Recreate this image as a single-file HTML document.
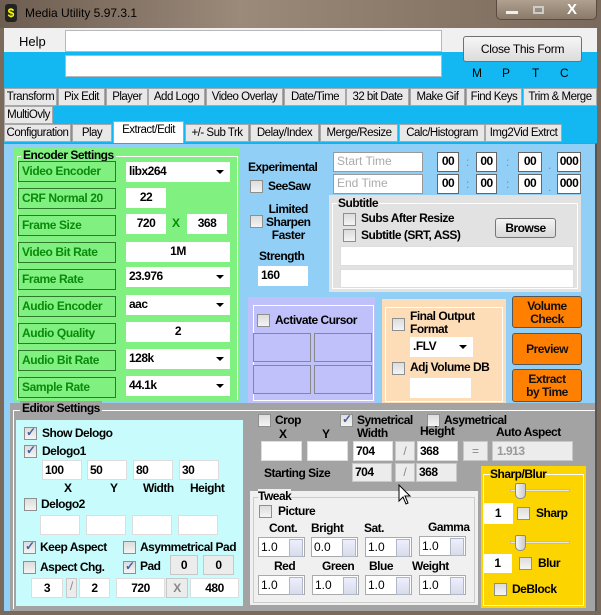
<!DOCTYPE html><html><head><meta charset="utf-8"><style>
*{margin:0;padding:0;box-sizing:border-box}
body{width:601px;height:615px;overflow:hidden;position:relative;font-family:"Liberation Sans",sans-serif;font-size:12px;background:#7a6a5c}
div,span{position:absolute}
.t{white-space:nowrap}
.b{font-weight:bold;letter-spacing:-0.5px;white-space:nowrap}
.in{background:#fff;border:1px solid #b8b8b8}
.tab{background:#e8e8e8;border:1px solid #a8a8a8;height:18px;text-align:center;line-height:16px;font-size:11.5px;letter-spacing:-0.5px;white-space:nowrap;overflow:hidden}
.cb{width:13px;height:13px;background:linear-gradient(#ddd,#f4f4f4);border:1px solid #8e8f8f}
.ck::after{content:"✓";position:absolute;left:1px;top:-3px;font-size:12px;color:#4a5fa0;font-weight:bold}
.lab{border:1px solid #2d7a2d;height:21px;color:#0a8a0a;font-weight:bold;font-size:12px;letter-spacing:-0.4px;line-height:18px;padding-left:3px;white-space:nowrap;overflow:hidden}
.c{text-align:center}
.dd::after{content:"";position:absolute;right:6px;top:8px;border:4px solid transparent;border-top:4px solid #000}
.ob{background:#ff7f00;border:1px solid #555;border-radius:3px;font-weight:bold;letter-spacing:-0.5px;text-align:center;color:#111;font-size:12px}
.sp{background:#fff;border:1px solid #aaa;height:20px;font-size:12px;padding-left:2px;line-height:18px}
.sp::after{content:"";position:absolute;right:1px;top:1px;width:12px;height:16px;background:linear-gradient(#eef,#d8dce8);border:1px solid #b0b8c8}
.g{background:#ececec;border:1px solid #c8c8c8}
</style></head><body>
<div style="left:0;top:0;width:601px;height:28px;background:linear-gradient(90deg,#6d5d50,#9b8a7a 40%,#8a7868 70%,#7a6a5c)"></div>
<div class="t" style="left:5px;top:4px;width:12px;height:18px;background:#222;border-radius:3px;color:#ff0;font-size:12px;font-weight:bold;text-align:center;line-height:18px">$</div>
<div class="t" style="left:25px;top:6px;font-size:12px;color:#000">Media Utility 5.97.3.1</div>
<div style="left:496px;top:0;width:101px;height:20px;border:1px solid #5a4a40;border-top:none;border-radius:0 0 5px 5px;background:linear-gradient(#b0a090,#8a7a6a)"></div>
<div style="left:506px;top:11px;width:12px;height:3px;background:#eee"></div>
<div style="left:533px;top:6px;width:11px;height:8px;border:2px solid #ccc"></div>
<div class="t" style="left:567px;top:1px;color:#fff;font-size:15px;font-weight:bold">X</div>
<div style="left:4px;top:28px;width:593px;height:583px;background:#13b8f2"></div>
<div style="left:4px;top:28px;width:593px;height:24px;background:#f0f0f0"></div>
<div class="t" style="left:19px;top:34px;font-size:13px">Help</div>
<div class="in" style="left:65px;top:30px;width:377px;height:22px"></div>
<div class="in" style="left:65px;top:55px;width:377px;height:22px"></div>
<div style="left:463px;top:36px;width:119px;height:26px;background:linear-gradient(#f6f6f6,#dcdcdc);border:1px solid #707070;border-radius:3px;text-align:center;line-height:24px;letter-spacing:-0.3px">Close This Form</div>
<div class="t" style="left:472px;top:66px">M</div><div class="t" style="left:502px;top:66px">P</div><div class="t" style="left:532px;top:66px">T</div><div class="t" style="left:560px;top:66px">C</div>
<div class="tab" style="left:4px;top:88px;width:53px">Transform</div>
<div class="tab" style="left:58px;top:88px;width:47px">Pix Edit</div>
<div class="tab" style="left:106px;top:88px;width:42px">Player</div>
<div class="tab" style="left:148px;top:88px;width:57px">Add Logo</div>
<div class="tab" style="left:206px;top:88px;width:77px">Video Overlay</div>
<div class="tab" style="left:284px;top:88px;width:62px">Date/Time</div>
<div class="tab" style="left:346px;top:88px;width:63px">32 bit Date</div>
<div class="tab" style="left:410px;top:88px;width:55px">Make Gif</div>
<div class="tab" style="left:466px;top:88px;width:56px">Find Keys</div>
<div class="tab" style="left:523px;top:88px;width:74px">Trim &amp; Merge</div>
<div class="tab" style="left:4px;top:106px;width:49px">MultiOvly</div>
<div class="tab" style="left:4px;top:124px;width:67px">Configuration</div>
<div class="tab" style="left:72px;top:124px;width:40px">Play</div>
<div class="tab" style="left:113px;top:121px;width:71px;height:23px;background:#fff;border-bottom:none">Extract/Edit</div>
<div class="tab" style="left:185px;top:124px;width:64px">+/- Sub Trk</div>
<div class="tab" style="left:250px;top:124px;width:69px">Delay/Index</div>
<div class="tab" style="left:320px;top:124px;width:78px">Merge/Resize</div>
<div class="tab" style="left:399px;top:124px;width:86px">Calc/Histogram</div>
<div class="tab" style="left:485px;top:124px;width:77px">Img2Vid Extrct</div>
<div style="left:4px;top:143px;width:593px;height:468px;background:#92cff6;border-top:1px solid #888;border-right:2px solid #555"></div>
<div style="left:14px;top:148px;width:226px;height:254px;background:#80f080"></div>
<div style="left:17px;top:156px;width:221px;height:244px;border:1px solid #fff;border-bottom:none"></div>
<div class="b" style="left:21px;top:148px;background:#80f080;padding:0 2px;font-size:12px">Encoder Settings</div>
<div class="lab" style="left:18px;top:161px;width:98px">Video Encoder</div>
<div class="lab" style="left:18px;top:188px;width:98px">CRF Normal 20</div>
<div class="lab" style="left:18px;top:215px;width:98px">Frame Size</div>
<div class="lab" style="left:18px;top:242px;width:98px">Video Bit Rate</div>
<div class="lab" style="left:18px;top:269px;width:98px">Frame Rate</div>
<div class="lab" style="left:18px;top:296px;width:98px">Audio Encoder</div>
<div class="lab" style="left:18px;top:323px;width:98px">Audio Quality</div>
<div class="lab" style="left:18px;top:350px;width:98px">Audio Bit Rate</div>
<div class="lab" style="left:18px;top:377px;width:98px">Sample Rate</div>
<div class="in dd b" style="left:126px;top:162px;width:104px;height:20px;border:none;padding-left:3px;line-height:19px">libx264</div>
<div class="in b c" style="left:126px;top:188px;width:40px;height:20px;border:none;line-height:19px">22</div>
<div class="in b c" style="left:126px;top:214px;width:40px;height:20px;border:none;line-height:19px">720</div>
<div class="b" style="left:172px;top:216px;color:#0a8a0a">X</div>
<div class="in b c" style="left:187px;top:214px;width:40px;height:20px;border:none;line-height:19px">368</div>
<div class="in b c" style="left:126px;top:242px;width:104px;height:20px;border:none;line-height:19px">1M</div>
<div class="in dd b" style="left:126px;top:267px;width:104px;height:20px;border:none;padding-left:3px;line-height:19px">23.976</div>
<div class="in dd b" style="left:126px;top:295px;width:104px;height:20px;border:none;padding-left:3px;line-height:19px">aac</div>
<div class="in b c" style="left:126px;top:322px;width:104px;height:20px;border:none;line-height:19px">2</div>
<div class="in dd b" style="left:126px;top:349px;width:104px;height:20px;border:none;padding-left:3px;line-height:19px">128k</div>
<div class="in dd b" style="left:126px;top:376px;width:104px;height:20px;border:none;padding-left:3px;line-height:19px">44.1k</div>
<div class="b" style="left:248px;top:160px">Experimental</div>
<div class="cb" style="left:250px;top:180px"></div><div class="b" style="left:268px;top:179px">SeeSaw</div>
<div class="cb" style="left:250px;top:215px"></div>
<div class="b c" style="left:266px;top:203px;line-height:13px">Limited<br>Sharpen<br>Faster</div>
<div class="b" style="left:259px;top:249px">Strength</div>
<div class="in b" style="left:258px;top:266px;width:50px;height:20px;border:none;padding-left:3px;line-height:19px">160</div>
<div class="in t" style="left:333px;top:152px;width:90px;height:20px;border-color:#999;color:#aaa;padding-left:3px;line-height:17px">Start Time</div>
<div class="in t" style="left:333px;top:174px;width:90px;height:20px;border-color:#999;color:#aaa;padding-left:3px;line-height:17px">End Time</div>
<div class="in b c" style="left:437px;top:152px;width:22px;height:20px;border-color:#666;line-height:17px">00</div>
<div class="in b c" style="left:476px;top:152px;width:21px;height:20px;border-color:#666;line-height:17px">00</div>
<div class="in b c" style="left:518px;top:152px;width:24px;height:20px;border-color:#666;line-height:17px">00</div>
<div class="in b c" style="left:557px;top:152px;width:24px;height:20px;border-color:#666;line-height:17px">000</div>
<div class="in b c" style="left:437px;top:174px;width:22px;height:20px;border-color:#666;line-height:17px">00</div>
<div class="in b c" style="left:476px;top:174px;width:21px;height:20px;border-color:#666;line-height:17px">00</div>
<div class="in b c" style="left:518px;top:174px;width:24px;height:20px;border-color:#666;line-height:17px">00</div>
<div class="in b c" style="left:557px;top:174px;width:24px;height:20px;border-color:#666;line-height:17px">000</div>
<div class="t" style="left:466px;top:155px;color:#888">:</div><div class="t" style="left:506px;top:155px;color:#888">:</div><div class="t" style="left:548px;top:158px;color:#888">.</div>
<div class="t" style="left:466px;top:177px;color:#888">:</div><div class="t" style="left:506px;top:177px;color:#888">:</div><div class="t" style="left:548px;top:180px;color:#888">.</div>
<div style="left:329px;top:195px;width:252px;height:97px;background:#e2e2e2"></div>
<div style="left:332px;top:203px;width:246px;height:86px;border:1px solid #fff"></div>
<div class="b" style="left:337px;top:196px;background:#e2e2e2;padding:0 1px">Subtitle</div>
<div class="cb" style="left:343px;top:213px"></div><div class="b" style="left:361px;top:211px">Subs After Resize</div>
<div class="cb" style="left:343px;top:229px"></div><div class="b" style="left:361px;top:228px">Subtitle (SRT, ASS)</div>
<div class="b c" style="left:495px;top:218px;width:61px;height:20px;background:linear-gradient(#f4f4f4,#d8d8d8);border:1px solid #777;border-radius:3px;line-height:18px">Browse</div>
<div class="in" style="left:340px;top:246px;width:234px;height:20px;border-color:#ddd"></div>
<div class="in" style="left:340px;top:269px;width:234px;height:19px;border-color:#ddd"></div>
<div style="left:248px;top:297px;width:127px;height:106px;background:#c0c0fa"></div>
<div style="left:253px;top:305px;width:121px;height:96px;border:1px solid #fff"></div>
<div class="cb" style="left:257px;top:314px"></div><div class="b" style="left:275px;top:313px">Activate Cursor</div>
<div style="left:253px;top:333px;width:58px;height:29px;border:1px solid #888"></div>
<div style="left:314px;top:333px;width:58px;height:29px;border:1px solid #888"></div>
<div style="left:253px;top:365px;width:58px;height:29px;border:1px solid #888"></div>
<div style="left:314px;top:365px;width:58px;height:29px;border:1px solid #888"></div>
<div style="left:382px;top:299px;width:124px;height:104px;background:#fddcb8"></div>
<div style="left:385px;top:307px;width:118px;height:95px;border:1px solid #fff"></div>
<div class="cb" style="left:392px;top:318px"></div>
<div class="b" style="left:410px;top:310px;line-height:13px">Final Output<br>Format</div>
<div class="in dd b" style="left:410px;top:337px;width:63px;height:20px;border:none;padding-left:3px;line-height:19px">.FLV</div>
<div class="cb" style="left:392px;top:362px"></div><div class="b" style="left:410px;top:360px">Adj Volume DB</div>
<div class="in" style="left:410px;top:378px;width:61px;height:20px;border:none"></div>
<div class="ob" style="left:512px;top:296px;width:70px;height:32px;line-height:13px;padding-top:3px">Volume<br>Check</div>
<div class="ob" style="left:512px;top:333px;width:70px;height:32px;line-height:30px">Preview</div>
<div class="ob" style="left:512px;top:369px;width:70px;height:33px;line-height:13px;padding-top:3px">Extract<br>by Time</div>
<div style="left:10px;top:403px;width:585px;height:208px;background:#a3a3a3"></div>
<div style="left:13px;top:410px;width:582px;height:199px;border:1px solid #fff;border-right:none;border-bottom:none"></div>
<div class="b" style="left:20px;top:401px;background:#a3a3a3;padding:0 2px">Editor Settings</div>
<div style="left:16px;top:420px;width:227px;height:186px;background:#c8fcfc"></div>
<div class="cb ck" style="left:24px;top:427px"></div><div class="b" style="left:42px;top:426px">Show Delogo</div>
<div class="cb ck" style="left:24px;top:445px"></div><div class="b" style="left:42px;top:444px">Delogo1</div>
<div class="in b" style="left:42px;top:460px;width:40px;height:20px;border-color:#ddd;padding-left:2px;line-height:18px">100</div>
<div class="in b" style="left:87px;top:460px;width:40px;height:20px;border-color:#ddd;padding-left:2px;line-height:18px">50</div>
<div class="in b" style="left:133px;top:460px;width:40px;height:20px;border-color:#ddd;padding-left:2px;line-height:18px">80</div>
<div class="in b" style="left:179px;top:460px;width:40px;height:20px;border-color:#ddd;padding-left:2px;line-height:18px">30</div>
<div class="b" style="left:64px;top:481px">X</div><div class="b" style="left:110px;top:481px">Y</div><div class="b" style="left:143px;top:481px">Width</div><div class="b" style="left:190px;top:481px">Height</div>
<div class="cb" style="left:24px;top:498px"></div><div class="b" style="left:41px;top:497px">Delogo2</div>
<div class="in" style="left:40px;top:515px;width:40px;height:20px;border-color:#ddd"></div>
<div class="in" style="left:86px;top:515px;width:40px;height:20px;border-color:#ddd"></div>
<div class="in" style="left:132px;top:515px;width:40px;height:20px;border-color:#ddd"></div>
<div class="in" style="left:178px;top:515px;width:40px;height:20px;border-color:#ddd"></div>
<div class="cb ck" style="left:23px;top:541px"></div><div class="b" style="left:40px;top:540px">Keep Aspect</div>
<div class="cb" style="left:123px;top:541px"></div><div class="b" style="left:140px;top:540px">Asymmetrical Pad</div>
<div class="cb" style="left:23px;top:561px"></div><div class="b" style="left:40px;top:560px">Aspect Chg.</div>
<div class="cb ck" style="left:123px;top:561px"></div><div class="b" style="left:140px;top:559px">Pad</div>
<div class="g b c" style="left:170px;top:555px;width:28px;height:20px;line-height:18px">0</div>
<div class="g b c" style="left:203px;top:555px;width:31px;height:20px;line-height:18px">0</div>
<div class="in b c" style="left:31px;top:578px;width:32px;height:20px;border-color:#ddd;line-height:18px">3</div>
<div class="g c" style="left:66px;top:578px;width:11px;height:20px;color:#888">/</div>
<div class="in b c" style="left:79px;top:578px;width:31px;height:20px;border-color:#ddd;line-height:18px">2</div>
<div class="in b c" style="left:116px;top:578px;width:49px;height:20px;border-color:#ddd;line-height:18px">720</div>
<div class="g b c" style="left:166px;top:578px;width:22px;height:20px;color:#888;line-height:18px">X</div>
<div class="in b c" style="left:190px;top:578px;width:49px;height:20px;border-color:#ddd;line-height:18px">480</div>
<div class="cb" style="left:258px;top:414px"></div><div class="b" style="left:275px;top:413px">Crop</div>
<div class="cb ck" style="left:340px;top:414px"></div><div class="b" style="left:357px;top:413px">Symetrical</div>
<div class="cb" style="left:427px;top:414px"></div><div class="b" style="left:444px;top:413px">Asymetrical</div>
<div class="b" style="left:279px;top:427px">X</div><div class="b" style="left:322px;top:427px">Y</div>
<div class="b" style="left:357px;top:426px">Width</div><div class="b" style="left:420px;top:424px">Height</div><div class="b" style="left:496px;top:425px">Auto Aspect</div>
<div class="in" style="left:261px;top:441px;width:41px;height:20px;border-color:#ddd"></div>
<div class="in" style="left:307px;top:441px;width:41px;height:20px;border-color:#ddd"></div>
<div class="in b" style="left:353px;top:441px;width:40px;height:20px;border-color:#ddd;padding-left:2px;line-height:18px">704</div>
<div class="g c" style="left:395px;top:441px;width:20px;height:20px;color:#888;line-height:18px">/</div>
<div class="in b" style="left:417px;top:441px;width:41px;height:20px;border-color:#ddd;padding-left:2px;line-height:18px">368</div>
<div class="g c" style="left:463px;top:441px;width:25px;height:20px;color:#888;line-height:18px">=</div>
<div class="g b" style="left:492px;top:441px;width:81px;height:20px;color:#999;padding-left:4px;line-height:18px">1.913</div>
<div class="b" style="left:264px;top:466px">Starting Size</div>
<div class="g b" style="left:352px;top:463px;width:40px;height:19px;padding-left:2px;line-height:17px">704</div>
<div class="g c" style="left:395px;top:463px;width:20px;height:19px;color:#888;line-height:17px">/</div>
<div class="g b" style="left:416px;top:463px;width:41px;height:19px;padding-left:2px;line-height:17px">368</div>
<div style="left:250px;top:491px;width:228px;height:114px;background:#f0f0f0"></div>
<div style="left:253px;top:497px;width:222px;height:106px;border:1px solid #ccc"></div>
<div class="b" style="left:258px;top:489px;background:#f0f0f0">Tweak</div>
<div class="cb" style="left:259px;top:505px"></div><div class="b" style="left:278px;top:504px">Picture</div>
<div class="b" style="left:269px;top:521px">Cont.</div><div class="b" style="left:311px;top:521px">Bright</div><div class="b" style="left:364px;top:521px">Sat.</div><div class="b" style="left:428px;top:520px">Gamma</div>
<div class="sp" style="left:258px;top:537px;width:47px">1.0</div>
<div class="sp" style="left:311px;top:537px;width:47px">0.0</div>
<div class="sp" style="left:365px;top:537px;width:47px">1.0</div>
<div class="sp" style="left:419px;top:536px;width:47px">1.0</div>
<div class="b" style="left:274px;top:559px">Red</div><div class="b" style="left:322px;top:559px">Green</div><div class="b" style="left:369px;top:559px">Blue</div><div class="b" style="left:412px;top:559px">Weight</div>
<div class="sp" style="left:258px;top:575px;width:47px">1.0</div>
<div class="sp" style="left:312px;top:575px;width:47px">1.0</div>
<div class="sp" style="left:365px;top:575px;width:47px">1.0</div>
<div class="sp" style="left:419px;top:575px;width:47px">1.0</div>
<div style="left:481px;top:466px;width:105px;height:142px;background:#fcd400"></div>
<div style="left:483px;top:474px;width:101px;height:132px;border:1px solid #fff"></div>
<div class="b" style="left:490px;top:467px;background:#fcd400">Sharp/Blur</div>
<div style="left:510px;top:489px;width:60px;height:3px;background:#e8e8e8;border:1px solid #bbb"></div>
<div style="left:515px;top:483px;width:11px;height:16px;background:linear-gradient(90deg,#f4f4f4,#ccc);border:1px solid #888;border-radius:2px 2px 5px 5px"></div>
<div class="in b c" style="left:483px;top:503px;width:30px;height:21px;border:none;line-height:21px">1</div>
<div class="cb" style="left:517px;top:507px"></div><div class="b" style="left:536px;top:506px">Sharp</div>
<div style="left:510px;top:541px;width:60px;height:3px;background:#e8e8e8;border:1px solid #bbb"></div>
<div style="left:515px;top:535px;width:11px;height:16px;background:linear-gradient(90deg,#f4f4f4,#ccc);border:1px solid #888;border-radius:2px 2px 5px 5px"></div>
<div class="in b c" style="left:483px;top:554px;width:29px;height:19px;border:none;line-height:19px">1</div>
<div class="cb" style="left:519px;top:557px"></div><div class="b" style="left:538px;top:556px">Blur</div>
<div class="cb" style="left:494px;top:583px"></div><div class="b" style="left:512px;top:582px">DeBlock</div>
<svg style="position:absolute;left:398px;top:484px" width="14" height="22"><path d="M1 1 L1 17 L5 13 L8 20 L10 19 L7 12 L12 12 Z" fill="#fff" stroke="#000"/></svg>
</body></html>
